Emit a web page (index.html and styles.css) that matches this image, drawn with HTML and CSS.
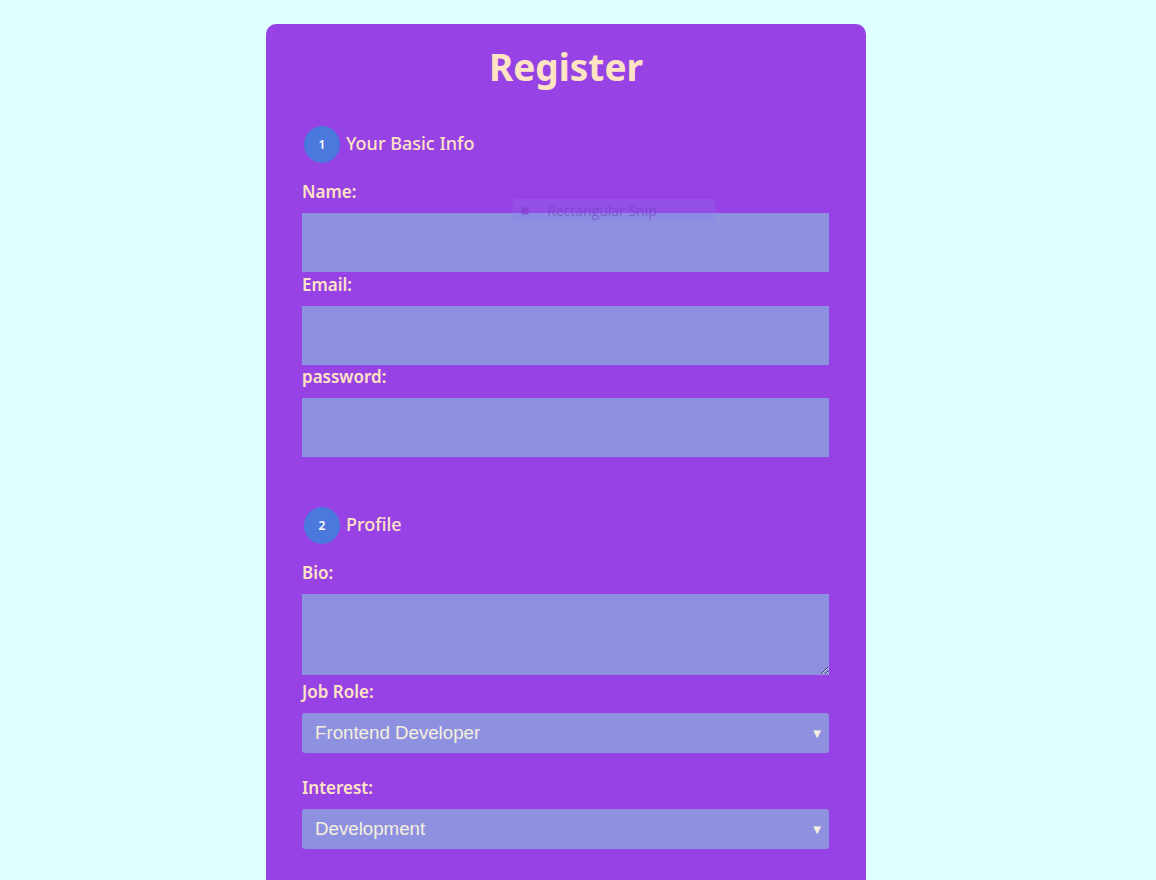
FILE: index.html
```html
<!DOCTYPE html>
<html lang="en">
<head>
<meta charset="utf-8">
<title>Register</title>
<link rel="stylesheet" href="styles.css">
</head>
<body>
<main class="card">
  <h1 class="title">Register</h1>
  <form class="form">
    <section class="section">
      <div class="section-head"><span class="step">1</span><span class="section-title">Your Basic Info</span></div>
      <label class="label" for="name">Name:</label>
      <input class="field" id="name" type="text">
      <label class="label" for="email">Email:</label>
      <input class="field" id="email" type="email">
      <label class="label" for="pw">password:</label>
      <input class="field" id="pw" type="password">
    </section>
    <section class="section section-2">
      <div class="section-head"><span class="step">2</span><span class="section-title">Profile</span></div>
      <label class="label" for="bio">Bio:</label>
      <textarea class="field area" id="bio"></textarea>
      <label class="label" for="job">Job Role:</label>
      <div class="select-wrap"><select class="select" id="job"><option>Frontend Developer</option></select><span class="arrow">▼</span></div>
      <label class="label label-gap" for="interest">Interest:</label>
      <div class="select-wrap"><select class="select" id="interest"><option>Development</option></select><span class="arrow">▼</span></div>
    </section>
  </form>
  <div class="snip"><span class="snip-dot"></span><span class="snip-text">Rectangular Snip</span></div>
</main>
</body>
</html>
```
FILE: styles.css
```css
html, body {
  margin: 0;
  padding: 0;
}
body {
  background: #e0ffff;
  font-family: "Noto Sans", "DejaVu Sans", sans-serif;
  height: 880px;
  overflow: hidden;
}
.card {
  position: relative;
  width: 528px;
  margin: 24px 0 0 266px;
  padding: 18px 36px 40px 36px;
  background: #9742e4;
  border-radius: 10px;
  min-height: 900px;
}
.title {
  margin: 0;
  text-align: center;
  color: #ffe4c4;
  font-size: 37px;
  line-height: 50px;
  font-weight: 700;
}
.form {
  margin-top: 34px;
}
.section-head {
  display: flex;
  align-items: center;
  gap: 6px;
  margin-left: 2px;
  margin-bottom: 17px;
}
.step {
  width: 36px;
  height: 37px;
  border-radius: 50%;
  background: #4a78dc;
  color: #fff;
  font-size: 12px;
  font-weight: 600;
  display: flex;
  align-items: center;
  justify-content: center;
}
.section-title {
  color: #ffe4c4;
  font-size: 18px;
  font-weight: 500;
  margin-bottom: 3px;
}
.label {
  display: block;
  color: #ffe4c4;
  font-size: 17px;
  font-weight: 600;
  line-height: 24px;
  margin-bottom: 9px;
}
.field {
  display: block;
  box-sizing: border-box;
  width: 527px;
  height: 59px;
  margin: 0 0 0.5px 0;
  border: none;
  background: #8e90e0;
  padding: 0 10px;
}
.section-2 {
  margin-top: 50px;
}
.area {
  height: 81px;
  margin-bottom: 5px;
  resize: vertical;
}
.select-wrap {
  position: relative;
  width: 527px;
}
.select {
  display: block;
  width: 527px;
  height: 40px;
  border: none;
  border-radius: 3px;
  background: #8e90e0;
  color: #f5f0dc;
  font-family: "Liberation Sans", Arial, sans-serif;
  font-size: 18.7px;
  padding: 0 0 2px 13px;
  appearance: none;
  -webkit-appearance: none;
}
.arrow {
  position: absolute;
  right: 8px;
  top: 13px;
  font-size: 10px;
  color: #f5f0dc;
  pointer-events: none;
}
.label-gap {
  margin-top: 23px;
}
.snip {
  position: absolute;
  left: 247px;
  top: 175px;
  width: 202px;
  height: 23px;
  display: flex;
  align-items: center;
  background: rgba(140, 120, 240, 0.25);
}
.snip-dot {
  width: 8px;
  height: 8px;
  border-radius: 50%;
  background: rgba(130, 60, 200, 0.6);
  margin: 0 18px 0 8px;
}
.snip-text {
  font-family: "Open Sans", sans-serif;
  font-size: 14px;
  color: rgba(110, 70, 190, 0.65);
}
```
